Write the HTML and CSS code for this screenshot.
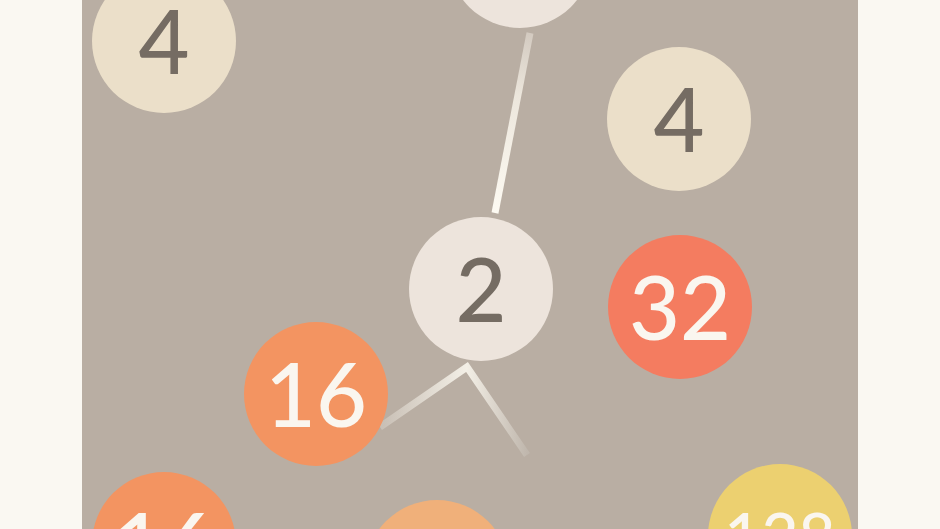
FILE: index.html
```html
<!DOCTYPE html>
<html lang="en">
<head>
<meta charset="utf-8">
<title>2048 Chain</title>
<link rel="stylesheet" href="styles.css">
</head>
<body>
  <main class="board">
    <svg class="links" width="776" height="529" viewBox="82 0 776 529" aria-hidden="true">
      <defs>
        <linearGradient id="linkA" gradientUnits="userSpaceOnUse" x1="530" y1="33" x2="495" y2="213">
          <stop offset="0" stop-color="#d3cac0"/>
          <stop offset="0.35" stop-color="#ece6dc"/>
          <stop offset="1" stop-color="#fdfaf2"/>
        </linearGradient>
        <linearGradient id="linkB" gradientUnits="userSpaceOnUse" x1="383" y1="0" x2="527" y2="0">
          <stop offset="0" stop-color="#c9c0b6"/>
          <stop offset="0.58" stop-color="#f3efe6"/>
          <stop offset="1" stop-color="#c0b7ad"/>
        </linearGradient>
      </defs>
      <line x1="530" y1="33" x2="495" y2="213" stroke="url(#linkA)" stroke-width="7"/>
      <polyline points="380,427 467,367 527,455" fill="none" stroke="url(#linkB)" stroke-width="7" stroke-linejoin="miter"/>
    </svg>

    <div class="tile t2" style="left: 366px; top: -116px;"></div>
    <div class="tile t4" style="left: 10px; top: -31px;">4</div>
    <div class="tile t4" style="left: 525px; top: 47px;">4</div>
    <div class="tile t2" style="left: 327px; top: 217px;">2</div>
    <div class="tile t32" style="left: 526px; top: 235px;">32</div>
    <div class="tile t16" style="left: 162px; top: 322px;">16</div>
    <div class="tile t16" style="left: 10px; top: 472px;">16</div>
    <div class="tile t8" style="left: 283px; top: 500px;">8</div>
    <div class="tile t128" style="left: 626px; top: 464px;">128</div>
  </main>
</body>
</html>
```

FILE: styles.css
```css
html, body {
  margin: 0;
  height: 100%;
}

body {
  background: #faf8f2;
  display: flex;
  justify-content: center;
  overflow: hidden;
  font-family: "Lato", "Liberation Sans", sans-serif;
}

.board {
  position: relative;
  width: 776px;
  height: 100%;
  background: #b9aea3;
  overflow: hidden;
}

.links {
  position: absolute;
  left: 0;
  top: 0;
}

/* numbered circles sit on the board at their own coordinates */
.tile {
  position: absolute;
  width: 144px;
  height: 144px;
  border-radius: 50%;
  display: flex;
  align-items: center;
  justify-content: center;
  font-size: 88px;
  font-weight: 500;
  line-height: 1;
  padding-bottom: 2px;
  box-sizing: border-box;
}

.t2 {
  background: #ede4dc;
  color: #756c63;
}

.t4 {
  background: #ebdfc9;
  color: #756c63;
}

.t8 {
  background: #f0b07a;
  color: #faf6ef;
}

.t16 {
  background: #f39461;
  color: #faf6ef;
}

.t32 {
  background: #f47c60;
  color: #faf6ef;
}

.t128 {
  background: #ecd070;
  color: #faf6ef;
  font-size: 64px;
}
```
